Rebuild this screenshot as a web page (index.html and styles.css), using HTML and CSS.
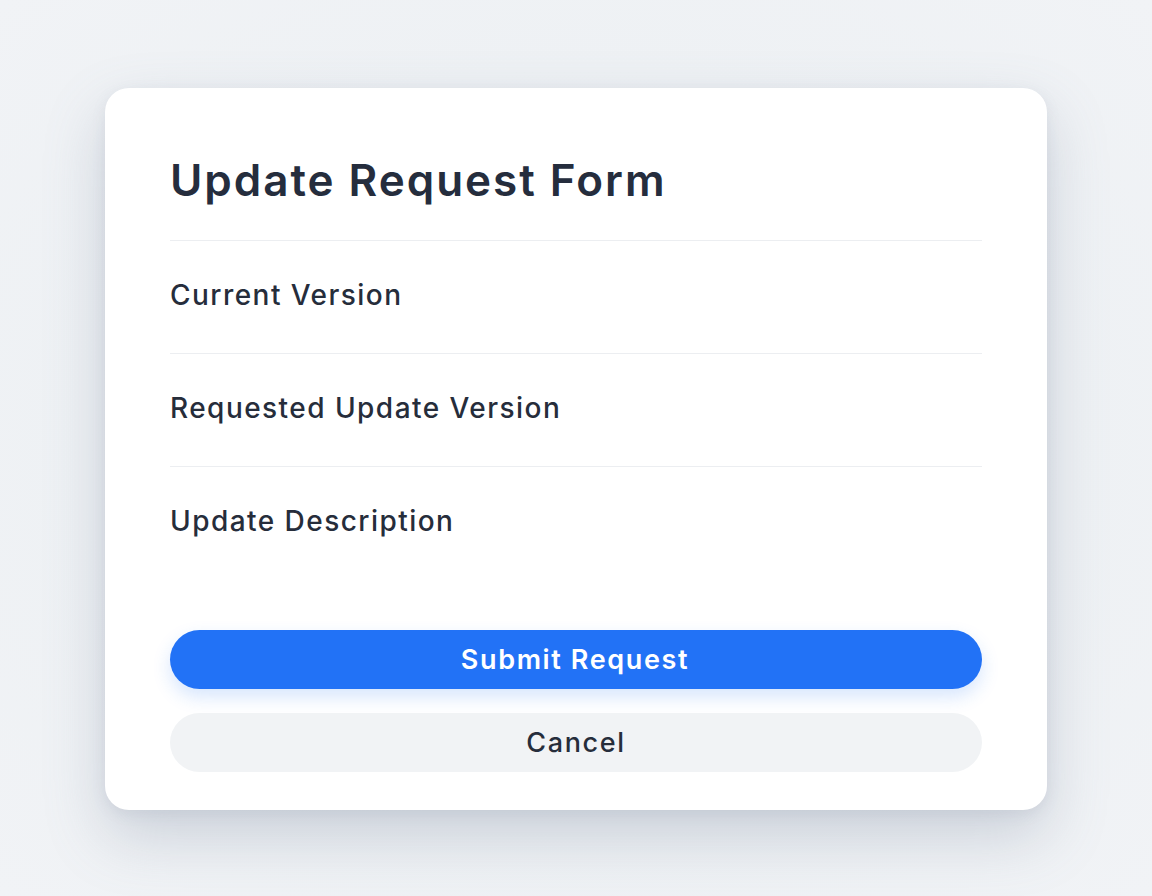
FILE: index.html
```html
<!DOCTYPE html>
<html lang="en">
<head>
<meta charset="utf-8">
<title>Update Request Form</title>
<link rel="stylesheet" href="styles.css">
</head>
<body>
<main class="card">
  <h1 class="title">Update Request Form</h1>
  <div class="field"><span class="label">Current Version</span></div>
  <div class="field"><span class="label">Requested Update Version</span></div>
  <div class="field"><span class="label">Update Description</span></div>
  <div class="actions">
    <button class="btn btn-primary" type="button">Submit Request</button>
    <button class="btn btn-secondary" type="button">Cancel</button>
  </div>
</main>
</body>
</html>
```

FILE: styles.css
```css
html, body {
  margin: 0;
  padding: 0;
}
body {
  box-sizing: border-box;
  min-height: 896px;
  padding-top: 2px;
  display: flex;
  align-items: center;
  justify-content: center;
  background: radial-gradient(ellipse at 50% 50%, #e9edf1 0%, #eef1f4 60%, #f1f3f6 100%);
  font-family: Inter, "Noto Sans", "Liberation Sans", sans-serif;
  color: #262d3c;
}
.card {
  box-sizing: border-box;
  width: 942px;
  height: 722px;
  background: #ffffff;
  border-radius: 24px;
  padding: 66px 65px 38px;
  display: flex;
  flex-direction: column;
  box-shadow: 0 26px 60px rgba(120, 132, 155, 0.3), 0 4px 14px rgba(120, 132, 155, 0.12);
}
.title {
  margin: 0 0 33px;
  font-size: 44px;
  line-height: 53px;
  font-weight: 600;
  color: #252d3d;
  letter-spacing: 0.045em;
}
.field {
  border-top: 1px solid #eceef1;
  padding: 37px 0 41px;
}
.field + .field {
  margin-top: 0;
}
.label {
  display: block;
  font-size: 28px;
  line-height: 34px;
  font-weight: 500;
  color: #262d3b;
  letter-spacing: 0.052em;
}
.actions {
  margin-top: auto;
  display: flex;
  flex-direction: column;
  gap: 24px;
}
.btn {
  font-family: inherit;
  border: 0;
  border-radius: 999px;
  height: 59px;
  width: 100%;
  font-size: 27px;
  letter-spacing: 0.06em;
  cursor: pointer;
}
.btn-primary {
  background: #2272f6;
  color: #ffffff;
  font-weight: 600;
  padding-right: 8px;
  box-shadow: 0 8px 18px rgba(34, 114, 246, 0.18);
}
.btn-secondary {
  background: #f1f3f5;
  color: #262d3b;
  font-weight: 500;
}
```
